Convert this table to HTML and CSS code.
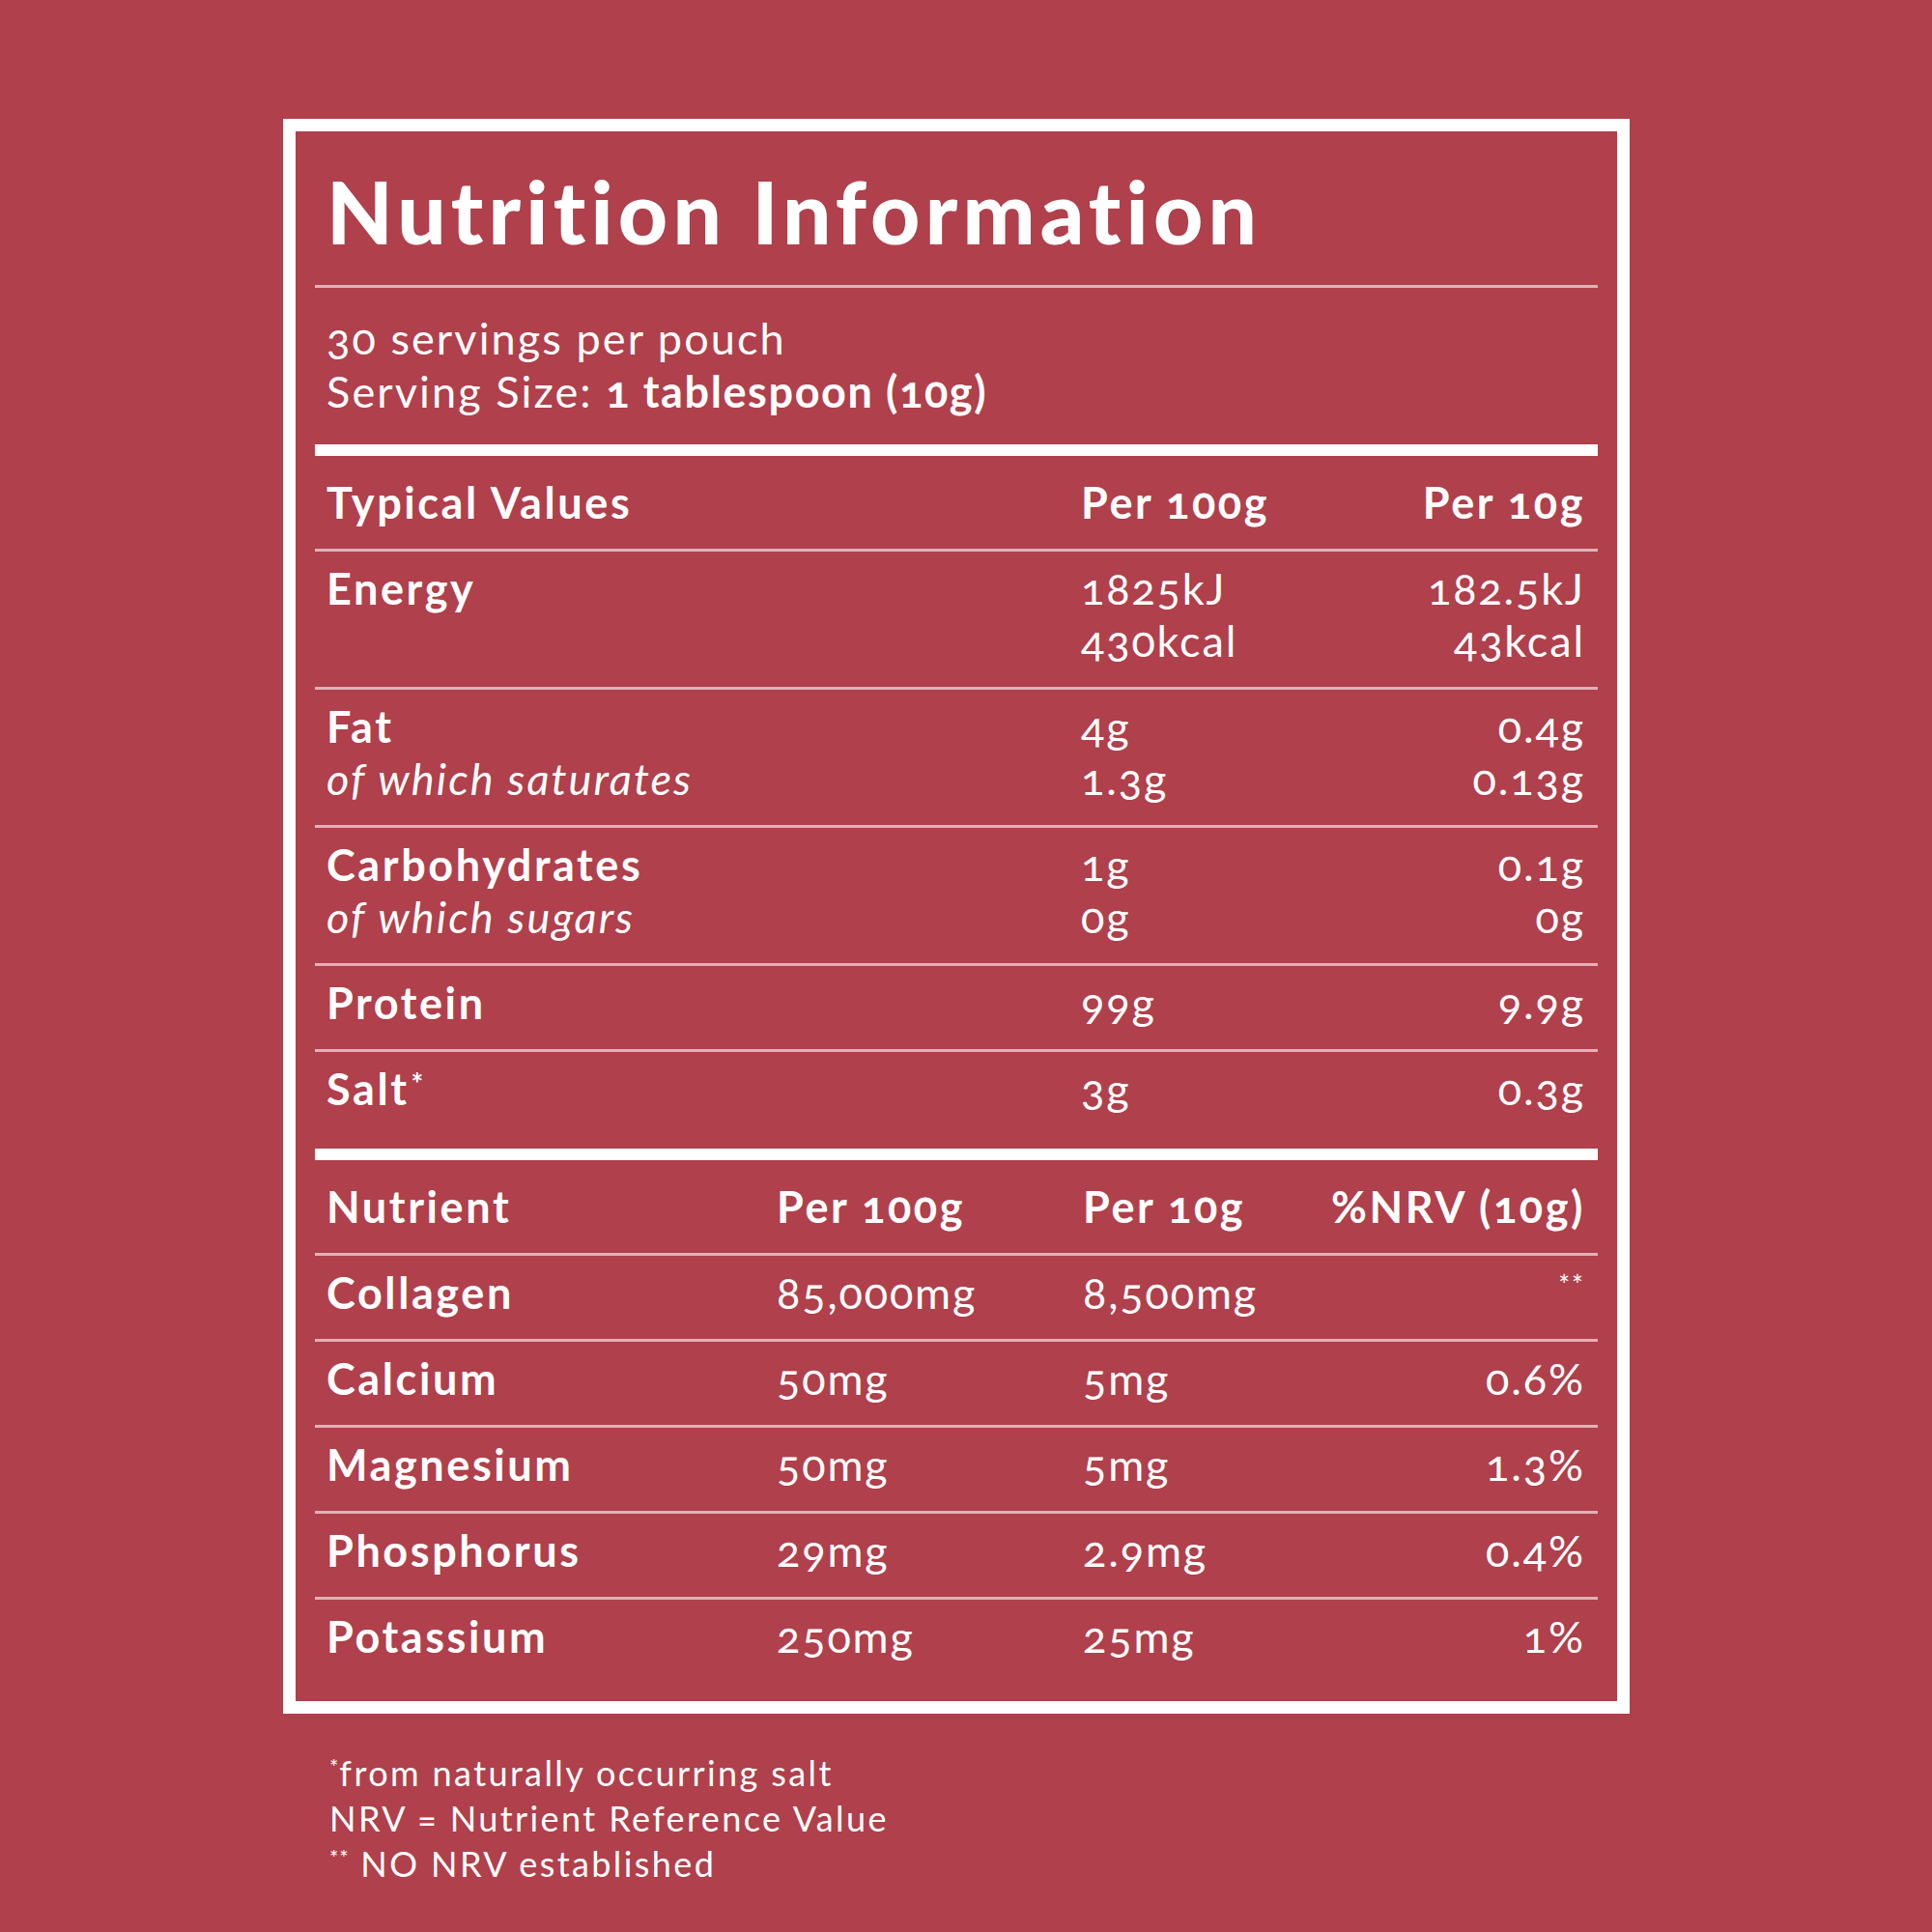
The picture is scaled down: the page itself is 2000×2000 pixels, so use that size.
FILE: index.html
```html
<!DOCTYPE html>
<html lang="en">
<head>
<meta charset="utf-8">
<title>Nutrition Information</title>
<link rel="stylesheet" href="styles.css">
</head>
<body>
<main class="page">
  <section class="card">
    <h1 class="title">Nutrition Information</h1>
    <div class="serving">
      <p>30 servings per pouch</p>
      <p>Serving Size: <strong>1 tablespoon (10g)</strong></p>
    </div>

    <div class="table table-typical">
      <div class="row head">
        <span>Typical Values</span>
        <span>Per 100g</span>
        <span class="r">Per 10g</span>
      </div>
      <div class="row">
        <span class="label">Energy</span>
        <span class="val">1825kJ<br>430kcal</span>
        <span class="val r">182.5kJ<br>43kcal</span>
      </div>
      <div class="row">
        <span class="label">Fat<br><em>of which saturates</em></span>
        <span class="val">4g<br>1.3g</span>
        <span class="val r">0.4g<br>0.13g</span>
      </div>
      <div class="row">
        <span class="label">Carbohydrates<br><em>of which sugars</em></span>
        <span class="val">1g<br>0g</span>
        <span class="val r">0.1g<br>0g</span>
      </div>
      <div class="row">
        <span class="label">Protein</span>
        <span class="val">99g</span>
        <span class="val r">9.9g</span>
      </div>
      <div class="row last">
        <span class="label">Salt<span class="ast">*</span></span>
        <span class="val">3g</span>
        <span class="val r">0.3g</span>
      </div>
    </div>

    <div class="table table-nutrient">
      <div class="row head">
        <span>Nutrient</span>
        <span>Per 100g</span>
        <span>Per 10g</span>
        <span class="r">%NRV (10g)</span>
      </div>
      <div class="row">
        <span class="label">Collagen</span>
        <span class="val">85,000mg</span>
        <span class="val">8,500mg</span>
        <span class="val r"><span class="stars">**</span></span>
      </div>
      <div class="row">
        <span class="label">Calcium</span>
        <span class="val">50mg</span>
        <span class="val">5mg</span>
        <span class="val r">0.6%</span>
      </div>
      <div class="row">
        <span class="label">Magnesium</span>
        <span class="val">50mg</span>
        <span class="val">5mg</span>
        <span class="val r">1.3%</span>
      </div>
      <div class="row">
        <span class="label">Phosphorus</span>
        <span class="val">29mg</span>
        <span class="val">2.9mg</span>
        <span class="val r">0.4%</span>
      </div>
      <div class="row">
        <span class="label">Potassium</span>
        <span class="val">250mg</span>
        <span class="val">25mg</span>
        <span class="val r">1%</span>
      </div>
    </div>
  </section>

  <footer class="notes">
    <p><span class="note-ast">*</span>from naturally occurring salt</p>
    <p>NRV = Nutrient Reference Value</p>
    <p><span class="note-ast">**</span> NO NRV established</p>
  </footer>
</main>
</body>
</html>
```
FILE: styles.css
```css
html, body {
  margin: 0;
  padding: 0;
  background: #af404c;
}

body {
  color: #fff;
  font-family: "Lato", "Liberation Sans", sans-serif;
  font-variant-numeric: oldstyle-nums;
  font-variant-ligatures: none;
}

.page {
  padding: 123px 0 0 293px;
  width: 1394px;
}

.card {
  box-sizing: border-box;
  width: 1394px;
  border: 13px solid #fff;
  padding: 0 20px 19px;
}

.title {
  margin: 0;
  padding: 38px 12px 32px;
  font-size: 89px;
  line-height: 89px;
  font-weight: 900;
  letter-spacing: 5.2px;
  white-space: nowrap;
  border-bottom: 3px solid rgba(255, 255, 255, 0.6);
}

.serving {
  padding: 25px 12px 27px;
  border-bottom: 12px solid #fff;
  font-size: 45px;
  line-height: 55px;
  letter-spacing: 2.1px;
}

.serving p {
  margin: 0;
  white-space: nowrap;
}

.serving strong {
  font-weight: 700;
  letter-spacing: 1.6px;
}

.table {
  font-size: 45px;
  line-height: 54px;
  letter-spacing: 2.6px;
}

.table-typical {
  border-bottom: 12px solid #fff;
}

.row {
  display: grid;
  padding: 11px 15px 21px 12px;
  border-top: 3px solid rgba(255, 255, 255, 0.6);
  white-space: nowrap;
}

.table-typical .row {
  grid-template-columns: 781px 1fr auto;
}

.table-nutrient .row {
  grid-template-columns: 466px 317px 1fr auto;
}

.row.head {
  border-top: 0;
  padding-top: 21px;
  font-weight: 700;
}

.row.last {
  padding-bottom: 35px;
}

.label {
  font-weight: 700;
}

.label em {
  font-weight: 400;
  font-style: italic;
  letter-spacing: 2.1px;
}

.val {
  font-weight: 400;
  letter-spacing: 1.9px;
}

.r {
  text-align: right;
  margin-right: -2px;
}

.ast {
  display: inline-block;
  vertical-align: top;
  margin-top: 6px;
  margin-left: 2px;
  font-size: 30px;
  line-height: 30px;
}

.stars {
  display: inline-block;
  vertical-align: top;
  margin-top: 5px;
  font-size: 28px;
  line-height: 28px;
  letter-spacing: 2px;
}

.notes {
  padding: 38px 0 0 48px;
  font-size: 36px;
  line-height: 47px;
  letter-spacing: 2.4px;
}

.notes p {
  margin: 0;
  white-space: nowrap;
}

.note-ast {
  display: inline-block;
  vertical-align: top;
  margin-top: 6px;
  font-size: 22px;
  line-height: 22px;
  letter-spacing: 1px;
}
```
